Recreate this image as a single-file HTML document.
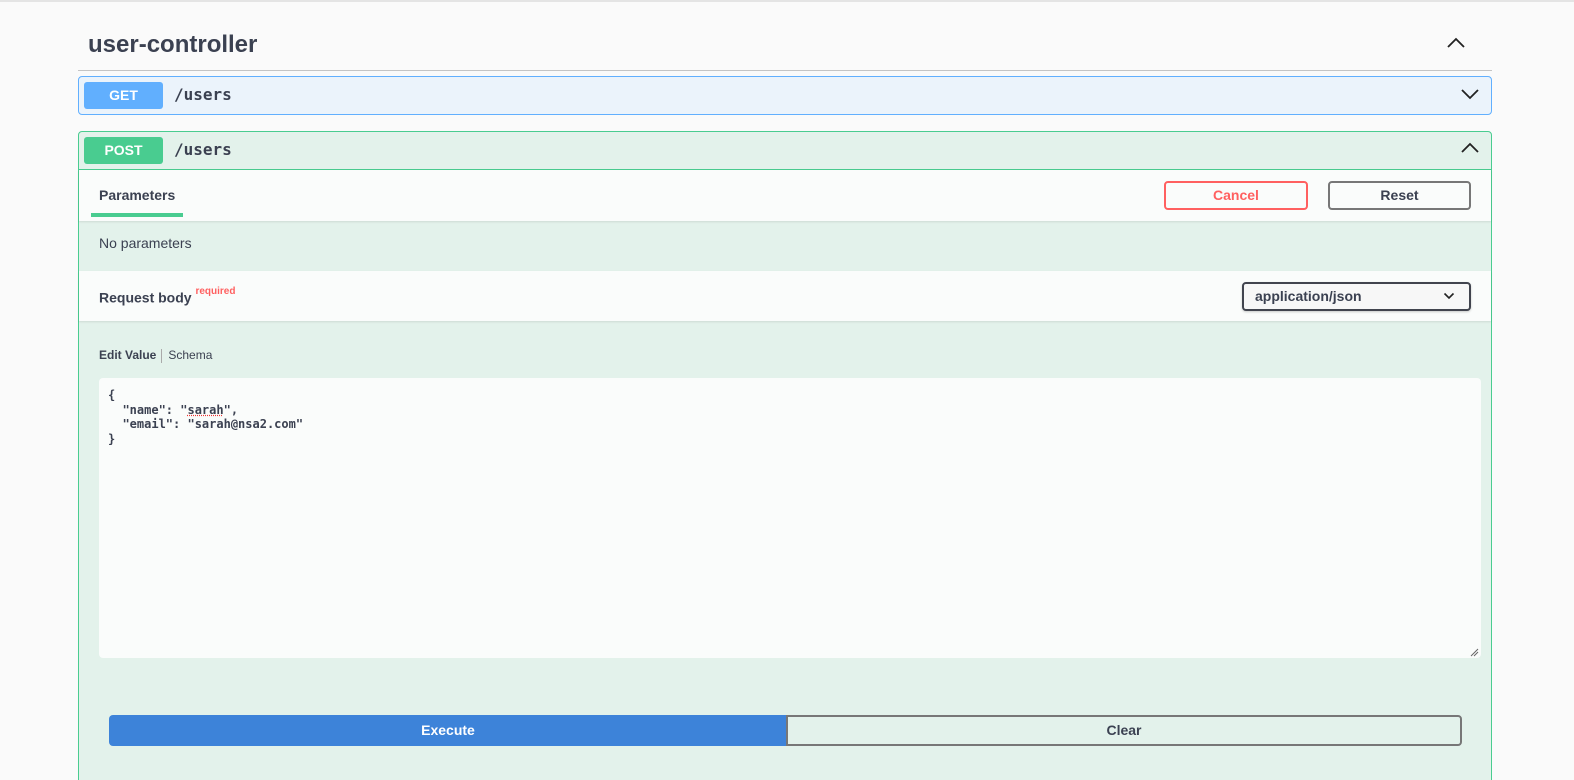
<!DOCTYPE html>
<html style="overflow:hidden;height:780px"><head><meta charset="utf-8"><style>
*{box-sizing:border-box;margin:0;padding:0}
body{width:1574px;height:780px;overflow:hidden;background:#fafafa;font-family:"Liberation Sans",sans-serif;color:#3b4151;position:relative}
.abs{position:absolute}
.mono{font-family:"DejaVu Sans Mono","Liberation Mono",monospace}
</style></head><body>
<div class="abs" style="left:0;top:0;width:1574px;height:2px;background:#e4e4e4"></div>
<div class="abs" style="left:88px;top:31px;font-size:24px;font-weight:bold;">user-controller</div>
<svg class="abs" style="left:1446px;top:36px" width="20" height="14"><path d="M2 11 L10 3 L18 11" fill="none" stroke="#222" stroke-width="1.8"/></svg>
<div class="abs" style="left:78px;top:70px;width:1414px;height:1px;background:#c4c4c4"></div>

<div class="abs" style="left:78px;top:76px;width:1414px;height:39px;background:#ebf3fb;border:1px solid #61affe;border-radius:4px"></div>
<div class="abs" style="left:84px;top:82px;width:79px;height:27px;background:#61affe;border-radius:3px;color:#fff;font-weight:bold;font-size:14px;text-align:center;line-height:27px">GET</div>
<div class="abs mono" style="left:174px;top:85px;font-size:16px;font-weight:bold;color:#3b4151">/users</div>
<svg class="abs" style="left:1460px;top:87px" width="20" height="14"><path d="M2 3 L10 11 L18 3" fill="none" stroke="#222" stroke-width="1.8"/></svg>

<div class="abs" style="left:78px;top:131px;width:1414px;height:680px;background:#e3f2eb;border:1px solid #49cc90;border-radius:4px"></div>
<div class="abs" style="left:79px;top:169px;width:1412px;height:1px;background:#49cc90"></div>
<div class="abs" style="left:84px;top:137px;width:79px;height:27px;background:#49cc90;border-radius:3px;color:#fff;font-weight:bold;font-size:14px;text-align:center;line-height:27px">POST</div>
<div class="abs mono" style="left:174px;top:140px;font-size:16px;font-weight:bold;color:#3b4151">/users</div>
<svg class="abs" style="left:1460px;top:141px" width="20" height="14"><path d="M2 11 L10 3 L18 11" fill="none" stroke="#222" stroke-width="1.8"/></svg>

<div class="abs" style="left:79px;top:170px;width:1412px;height:51px;background:#fafcfb;box-shadow:0 1px 2px rgba(0,0,0,.1)"></div>
<div class="abs" style="left:99px;top:187px;font-size:14px;font-weight:bold">Parameters</div>
<div class="abs" style="left:91px;top:213px;width:92px;height:4px;background:#49cc90"></div>
<div class="abs" style="left:1164px;top:181px;width:144px;height:29px;border:2px solid #ff6060;border-radius:4px;color:#ff6060;font-weight:bold;font-size:14px;text-align:center;line-height:25px">Cancel</div>
<div class="abs" style="left:1328px;top:181px;width:143px;height:29px;border:2px solid #777;border-radius:4px;color:#3b4151;font-weight:bold;font-size:14px;text-align:center;line-height:25px">Reset</div>

<div class="abs" style="left:99px;top:235px;font-size:14px">No parameters</div>

<div class="abs" style="left:79px;top:271px;width:1412px;height:50px;background:#fafcfb;box-shadow:0 1px 2px rgba(0,0,0,.1)"></div>
<div class="abs" style="left:99px;top:289px;font-size:14px;font-weight:bold">Request body <sup style="color:#ff6060;font-size:10px;font-weight:bold;position:relative;top:-3px">required</sup></div>
<div class="abs" style="left:1242px;top:282px;width:229px;height:29px;border:2px solid #41444e;border-radius:4px;background:#f7f7f7;box-shadow:0 1px 2px rgba(0,0,0,.2);font-weight:bold;font-size:14px;line-height:25px;padding-left:11px">application/json</div>
<svg class="abs" style="left:1443px;top:292px" width="12" height="8"><path d="M1.5 1.5 L6 6 L10.5 1.5" fill="none" stroke="#222" stroke-width="1.6"/></svg>

<div class="abs" style="left:99px;top:348px;font-size:12px"><b>Edit Value</b><span style="display:inline-block;width:1px;height:14px;background:#aaa;vertical-align:middle;margin:0 6px 0 5px"></span>Schema</div>

<div class="abs" style="left:99px;top:378px;width:1382px;height:280px;background:#fafcfb;border-radius:4px"></div>
<pre class="abs mono" style="left:108px;top:388px;font-size:12px;line-height:14.5px;font-weight:bold;color:#3b4151">{
  "name": "<span style="text-decoration:underline dotted #e33">sarah</span>",
  "email": "sarah@nsa2.com"
}</pre>
<svg class="abs" style="left:1470px;top:648px" width="9" height="9"><path d="M1 8 L8 1 M4 8 L8 4" stroke="#666" stroke-width="1"/></svg>

<div class="abs" style="left:109px;top:715px;width:678px;height:31px;background:#3d83d9;border-radius:4px 0 0 4px;color:#fff;font-weight:bold;font-size:14px;text-align:center;line-height:31px">Execute</div>
<div class="abs" style="left:786px;top:715px;width:676px;height:31px;border:2px solid #777;border-radius:0 4px 4px 0;color:#3b4151;font-weight:bold;font-size:14px;text-align:center;line-height:27px">Clear</div>
</body></html>
